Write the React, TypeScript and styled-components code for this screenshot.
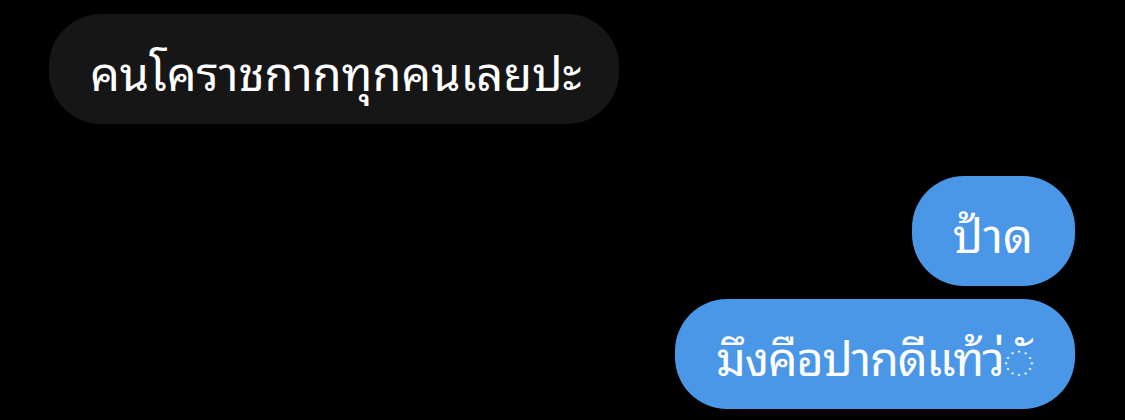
import React from "react";
import styled, { createGlobalStyle } from "styled-components";

const Global = createGlobalStyle`
  html, body { margin: 0; padding: 0; background: #000; }
  body { font-family: "Noto Sans Thai Looped", "Noto Sans Thai", "Noto Sans", sans-serif; }
`;

const Thread = styled.div`
  width: 1125px;
  height: 420px;
  box-sizing: border-box;
  padding: 14px 50px 0 49px;
  display: flex;
  flex-direction: column;
  background: #000;
  overflow: hidden;
`;

const Row = styled.div<{ $mine?: boolean; $gap: number }>`
  display: flex;
  justify-content: ${(p) => (p.$mine ? "flex-end" : "flex-start")};
  margin-top: ${(p) => p.$gap}px;
`;

const Bubble = styled.div<{ $mine?: boolean; $tight?: boolean }>`
  box-sizing: border-box;
  height: 110px;
  padding: 0 ${(p) => (p.$mine ? 42 : 37)}px 0 41px;
  border-radius: 52px;
  display: flex;
  align-items: center;
  background: ${(p) => (p.$mine ? "#4a97e8" : "#161616")};
  color: #fff;
  font-size: 47px;
  line-height: 1;
  letter-spacing: ${(p) => (p.$tight ? "-1.3px" : "0")};
  white-space: nowrap;
`;

export default function App() {
  return (
    <>
      <Global />
      <Thread>
        <Row $gap={0}>
          <Bubble>คนโคราชกากทุกคนเลยปะ</Bubble>
        </Row>
        <Row $mine $gap={52}>
          <Bubble $mine>ป้าด</Bubble>
        </Row>
        <Row $mine $gap={13}>
          <Bubble $mine $tight>มึงคือปากดีแท้ว่◌ั</Bubble>
        </Row>
      </Thread>
    </>
  );
}
